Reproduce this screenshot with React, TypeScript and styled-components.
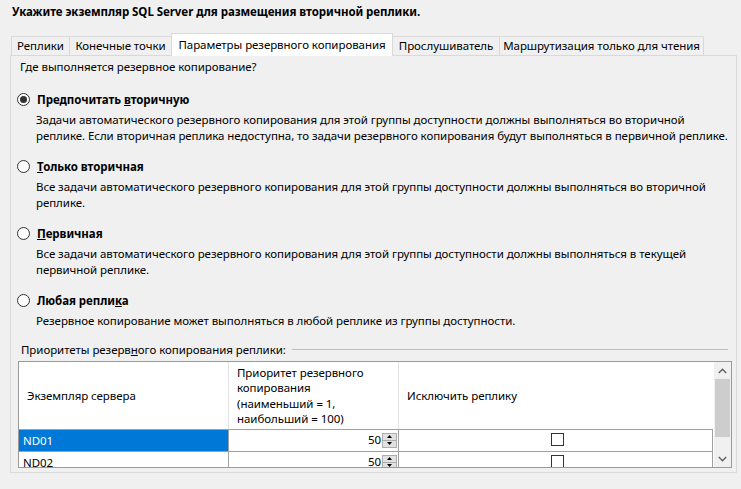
import React from "react";
import styled, { createGlobalStyle } from "styled-components";

const GlobalStyle = createGlobalStyle`
  html, body { margin: 0; padding: 0; background: #f0f0f0; }
  body {
    font-family: "Noto Sans", "Segoe UI", sans-serif;
    font-size: 11.5px;
    letter-spacing: -0.06px;
    color: #000;
  }
  * { box-sizing: border-box; }
`;

const Page = styled.div`
  width: 741px;
  height: 489px;
  padding: 4px 4px 0 10px;
  overflow: hidden;
`;

const Title = styled.div`
  font-weight: 700;
  line-height: 16px;
  padding-left: 2px;
  white-space: nowrap;
`;

const TabStrip = styled.div`
  display: flex;
  align-items: flex-end;
  height: 22px;
  margin-top: 13px;
  padding-left: 2px;
  position: relative;
  z-index: 1;
`;

const Tab = styled.div<{ $active?: boolean; $w: number }>`
  width: ${(p) => p.$w + 1}px;
  margin-left: -1px;
  height: ${(p) => (p.$active ? 23 : 19)}px;
  margin-bottom: ${(p) => (p.$active ? -1 : 0)}px;
  border: 1px solid #d9d9d9;
  border-bottom: none;
  background: ${(p) => (p.$active ? "#ffffff" : "#f0f0f0")};
  display: flex;
  justify-content: center;
  padding-top: ${(p) => (p.$active ? 3 : 1)}px;
  line-height: 16px;
  white-space: nowrap;
`;

const Panel = styled.div`
  width: 727px;
  height: 418px;
  border: 1px solid #d9d9d9;
  padding: 3px 4px 0 6px;
  display: flex;
  flex-direction: column;
`;

const Question = styled.div`
  line-height: 16px;
  padding-left: 3px;
`;

const Option = styled.div<{ $first?: boolean }>`
  margin-top: ${(p) => (p.$first ? 16 : 14)}px;
`;

const RadioRow = styled.div`
  display: flex;
  align-items: center;
  height: 16px;
  gap: 7px;
  font-weight: 700;
  white-space: nowrap;
`;

const RadioCircle = styled.span<{ $checked?: boolean }>`
  width: 13px;
  height: 13px;
  border-radius: 50%;
  border: 1px solid #333;
  background: #fff;
  display: flex;
  align-items: center;
  justify-content: center;
  flex: none;
  &::after {
    content: "";
    width: 7px;
    height: 7px;
    border-radius: 50%;
    background: #333;
    display: ${(p) => (p.$checked ? "block" : "none")};
  }
`;

const Description = styled.div`
  margin-top: 5px;
  padding-left: 19px;
  line-height: 16px;
  white-space: nowrap;
`;

const GroupHeader = styled.div`
  margin-top: 13px;
  display: flex;
  align-items: center;
  line-height: 16px;
  padding-left: 4px;
  margin-right: 4px;
  white-space: nowrap;
`;

const GroupLine = styled.div`
  flex: 1;
  height: 1px;
  background: #bfbfbf;
  margin-left: 6px;
  margin-top: -1px;
`;

const TableFrame = styled.div`
  margin-top: 3px;
  margin-left: 1px;
  width: 714px;
  height: 107px;
  border: 1px solid #9a9a9a;
  display: flex;
  overflow: hidden;
  background: #fff;
`;

const GridArea = styled.div`
  width: 694px;
  display: flex;
  flex-direction: column;
`;

const Row = styled.div<{ $h: number }>`
  display: grid;
  grid-template-columns: 210px 170px 314px;
  height: ${(p) => p.$h}px;
  flex: none;
  border-bottom: 1px solid #a0a0a0;
  background: #fff;
`;

const HeadCell = styled.div<{ $last?: boolean }>`
  display: flex;
  align-items: center;
  padding-left: 8px;
  line-height: 15.3px;
  border-right: ${(p) => (p.$last ? "none" : "1px solid #e3e3e3")};
`;

const Cell = styled.div<{ $selected?: boolean; $align?: string }>`
  display: flex;
  align-items: center;
  justify-content: ${(p) => p.$align || "flex-start"};
  padding-left: 4px;
  background: ${(p) => (p.$selected ? "#0078d7" : "#fff")};
  color: ${(p) => (p.$selected ? "#fff" : "#000")};
  border-right: 1px solid #a0a0a0;
  line-height: 16px;
`;

const SpinValue = styled.div`
  display: flex;
  align-items: center;
  justify-content: flex-end;
  width: 100%;
  gap: 1px;
  padding-right: 1px;
  align-self: flex-start;
  padding-top: 2px;
`;

const SpinBox = styled.div`
  width: 15px;
  height: 15px;
  display: flex;
  flex-direction: column;
  flex: none;
`;

const SpinBtn = styled.div`
  flex: 1;
  background: #e1e1e1;
  border: 1px solid #adadad;
  display: flex;
  align-items: center;
  justify-content: center;
  & + & { border-top: none; }
`;

const Check = styled.span`
  width: 13px;
  height: 13px;
  border: 1px solid #333;
  background: #fff;
  display: block;
  align-self: flex-start;
  margin-top: 3px;
`;

const Scrollbar = styled.div`
  width: 18px;
  background: #f0f0f0;
  border-left: 1px solid #fff;
  display: flex;
  flex-direction: column;
  padding-right: 1px;
`;

const ScrollBtn = styled.div`
  height: 17px;
  display: flex;
  align-items: center;
  justify-content: center;
  flex: none;
`;

const Thumb = styled.div`
  height: 58px;
  background: #cdcdcd;
  margin: 0 0 0 1px;
  flex: none;
`;

const Track = styled.div`
  flex: 1;
`;

const Chevron = ({ up }: { up?: boolean }) => (
  <svg width="9" height="6" viewBox="0 0 9 6">
    <path
      d={up ? "M0.8 5 L4.5 1.3 L8.2 5" : "M0.8 1 L4.5 4.7 L8.2 1"}
      fill="none"
      stroke="#606060"
      strokeWidth="1.4"
    />
  </svg>
);

const Tri = ({ up }: { up?: boolean }) => (
  <svg width="5" height="3" viewBox="0 0 5 3">
    <path d={up ? "M0 3 L2.5 0 L5 3 Z" : "M0 0 L2.5 3 L5 0 Z"} fill="#000" />
  </svg>
);

const Spinner = ({ value }: { value: number }) => (
  <SpinValue>
    <span>{value}</span>
    <SpinBox>
      <SpinBtn>
        <Tri up />
      </SpinBtn>
      <SpinBtn>
        <Tri />
      </SpinBtn>
    </SpinBox>
  </SpinValue>
);

const options = [
  {
    label: (
      <>
        Предпочитать <u>в</u>торичную
      </>
    ),
    checked: true,
    lines: [
      "Задачи автоматического резервного копирования для этой группы доступности должны выполняться во вторичной",
      "реплике. Если вторичная реплика недоступна, то задачи резервного копирования будут выполняться в первичной реплике.",
    ],
  },
  {
    label: (
      <>
        <u>Т</u>олько вторичная
      </>
    ),
    lines: [
      "Все задачи автоматического резервного копирования для этой группы доступности должны выполняться во вторичной",
      "реплике.",
    ],
  },
  {
    label: (
      <>
        <u>П</u>ервичная
      </>
    ),
    lines: [
      "Все задачи автоматического резервного копирования для этой группы доступности должны выполняться в текущей",
      "первичной реплике.",
    ],
  },
  {
    label: (
      <>
        Любая репли<u>к</u>а
      </>
    ),
    lines: ["Резервное копирование может выполняться в любой реплике из группы доступности."],
  },
];

const tabs = [
  { name: "Реплики", w: 58 },
  { name: "Конечные точки", w: 102 },
  { name: "Параметры резервного копирования", w: 221, active: true },
  { name: "Прослушиватель", w: 107 },
  { name: "Маршрутизация только для чтения", w: 204 },
];

const rows = [
  { name: "ND01", value: 50, selected: true, h: 22 },
  { name: "ND02", value: 50, h: 22 },
];

export default function App() {
  return (
    <>
      <GlobalStyle />
      <Page>
        <Title>Укажите экземпляр SQL Server для размещения вторичной реплики.</Title>
        <TabStrip>
          {tabs.map((t) => (
            <Tab key={t.name} $w={t.w} $active={t.active}>
              {t.name}
            </Tab>
          ))}
        </TabStrip>
        <Panel>
          <Question>Где выполняется резервное копирование?</Question>
          {options.map((o, i) => (
            <Option key={i} $first={i === 0}>
              <RadioRow>
                <RadioCircle $checked={o.checked} />
                <span>{o.label}</span>
              </RadioRow>
              <Description>
                {o.lines.map((l) => (
                  <div key={l}>{l}</div>
                ))}
              </Description>
            </Option>
          ))}
          <GroupHeader>
            <span>
              Приоритеты резерв<u>н</u>ого копирования реплики:
            </span>
            <GroupLine />
          </GroupHeader>
          <TableFrame>
            <GridArea>
              <Row $h={68}>
                <HeadCell>Экземпляр сервера</HeadCell>
                <HeadCell>
                  Приоритет резервного
                  <br />
                  копирования
                  <br />
                  (наименьший = 1,
                  <br />
                  наибольший = 100)
                </HeadCell>
                <HeadCell $last>Исключить реплику</HeadCell>
              </Row>
              {rows.map((r) => (
                <Row key={r.name} $h={r.h}>
                  <Cell $selected={r.selected}>{r.name}</Cell>
                  <Cell>
                    <Spinner value={r.value} />
                  </Cell>
                  <Cell $align="center">
                    <Check />
                  </Cell>
                </Row>
              ))}
            </GridArea>
            <Scrollbar>
              <ScrollBtn>
                <Chevron up />
              </ScrollBtn>
              <Thumb />
              <Track />
              <ScrollBtn>
                <Chevron />
              </ScrollBtn>
            </Scrollbar>
          </TableFrame>
        </Panel>
      </Page>
    </>
  );
}
